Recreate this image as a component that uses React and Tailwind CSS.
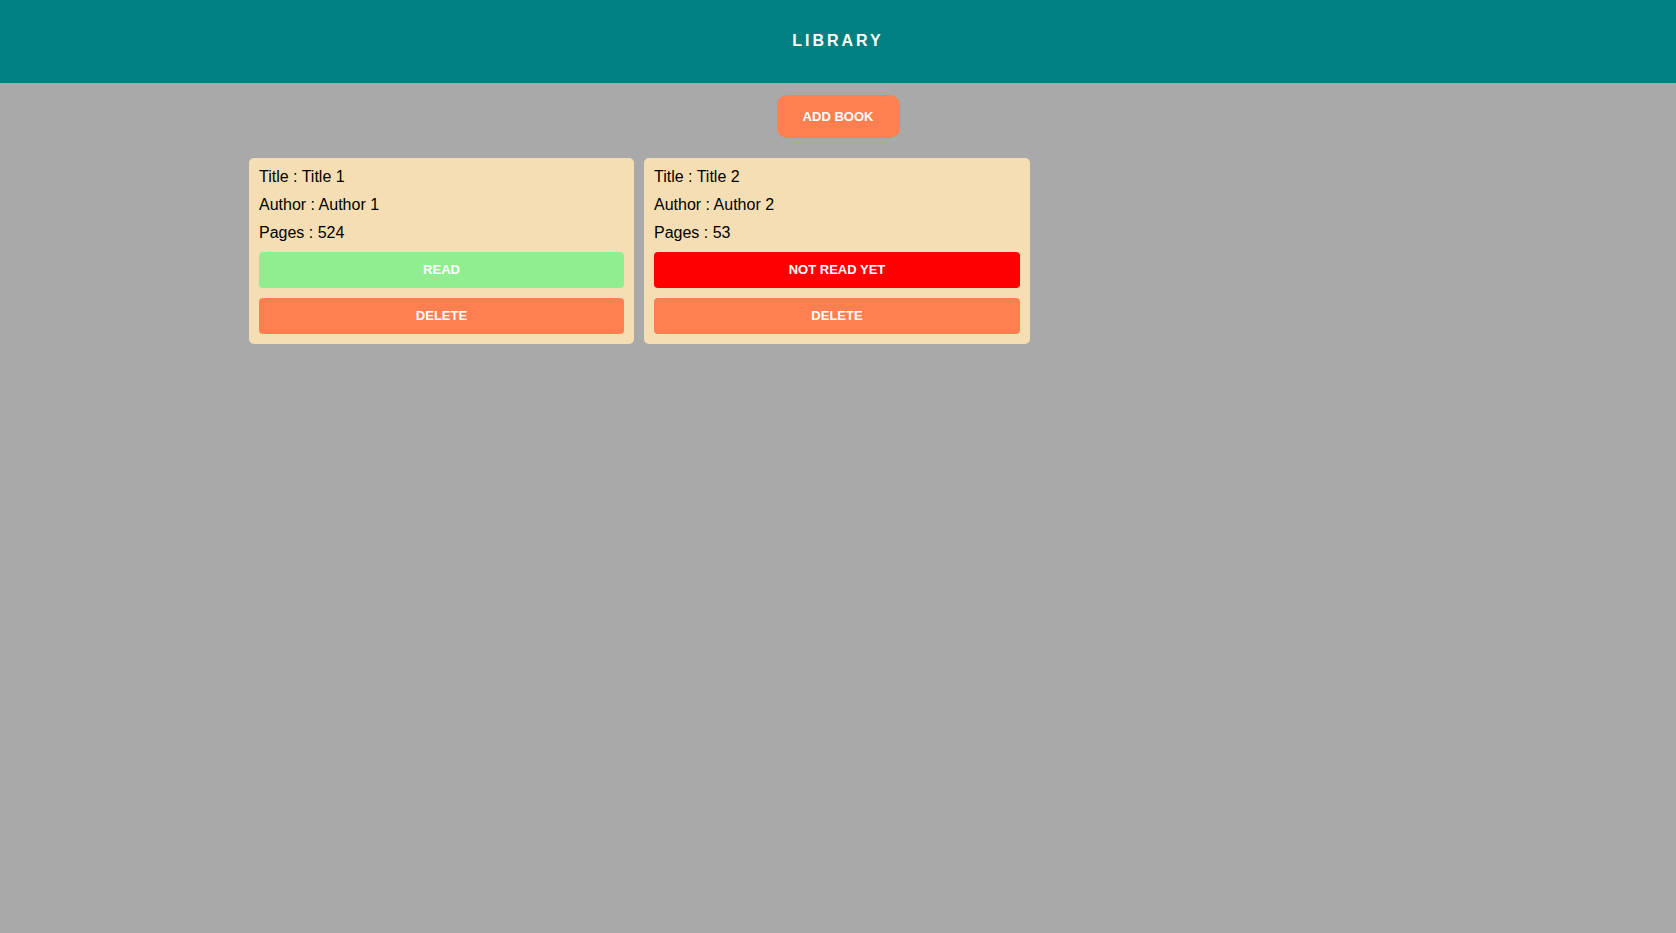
import React, { useState } from "react";

const initialBooks = [
  { id: 1, title: "Title 1", author: "Author 1", pages: 524, read: true },
  { id: 2, title: "Title 2", author: "Author 2", pages: 53, read: false },
];

export default function App() {
  const [books, setBooks] = useState(initialBooks);

  function toggleRead(id) {
    setBooks(books.map((b) => (b.id === id ? { ...b, read: !b.read } : b)));
  }

  function deleteBook(id) {
    setBooks(books.filter((b) => b.id !== id));
  }

  return (
    <div className="min-h-screen bg-[#a9a9a9] font-['Liberation_Sans',Arial,sans-serif]">
      {/* HEADER */}
      <header className="h-[83px] bg-[#008080] flex items-center justify-center pb-[2px]">
        <h1 className="text-white font-bold text-[16px] tracking-[3px]">
          LIBRARY
        </h1>
      </header>

      {/* ADD BUTTON */}
      <div className="flex justify-center mt-[12px]">
        <button className="w-[123px] h-[43px] rounded-[10px] bg-[#ff7f50] text-white text-[13px] font-bold">
          ADD BOOK
        </button>
      </div>

      {/* BOOKS */}
      <div className="w-[1178px] mx-auto mt-[20px] grid grid-cols-[385px_386px_385px] gap-[10px] items-start">
        {books.map((b) => (
          <div
            key={b.id}
            className="bg-[#f5deb3] rounded-[5px] p-[10px] flex flex-col gap-[10px] text-black text-[16px] leading-[18px]"
          >
            <p>Title : {b.title}</p>
            <p>Author : {b.author}</p>
            <p>Pages : {b.pages}</p>
            <button
              onClick={() => toggleRead(b.id)}
              className={
                b.read
                  ? "h-[36px] rounded-[4px] bg-[#90ee90] text-white text-[13px] font-bold"
                  : "h-[36px] rounded-[4px] bg-[#ff0000] text-white text-[13px] font-bold"
              }
            >
              {b.read ? "READ" : "NOT READ YET"}
            </button>
            <button
              onClick={() => deleteBook(b.id)}
              className="h-[36px] rounded-[4px] bg-[#ff7f50] text-white text-[13px] font-bold"
            >
              DELETE
            </button>
          </div>
        ))}
      </div>
    </div>
  );
}
